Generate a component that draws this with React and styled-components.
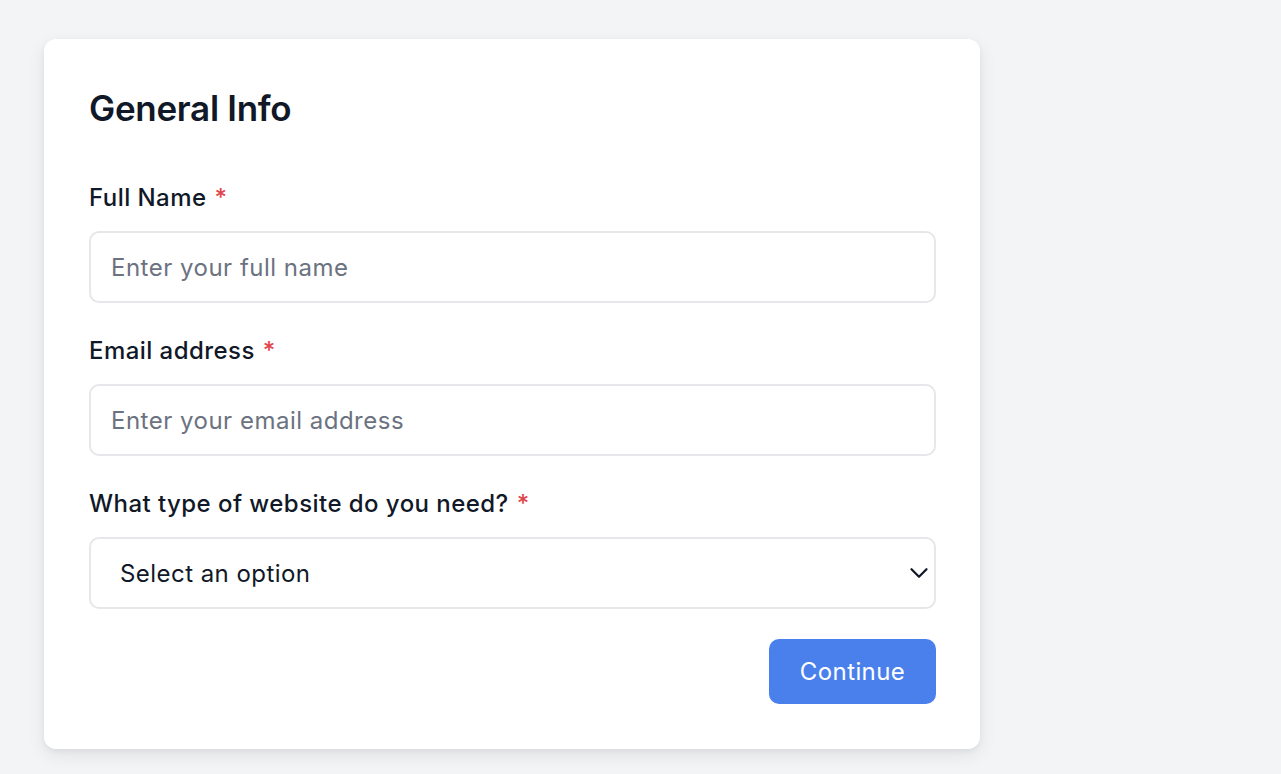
import React from "react";
import styled, { createGlobalStyle } from "styled-components";

const GlobalStyle = createGlobalStyle`
    html, body {
        margin: 0;
        padding: 0;
        background: #f3f4f6;
        font-family: Inter, "Noto Sans", "Liberation Sans", sans-serif;
        color: #111827;
    }
    * {
        box-sizing: border-box;
    }
`;

const Page = styled.div`
    min-height: 774px;
    padding: 39px 0 0 44px;
`;

const Card = styled.form`
    width: 936px;
    background: #ffffff;
    border-radius: 12px;
    padding: 45px 44px 45px 45px;
    box-shadow: 0 6px 18px rgba(0, 0, 0, 0.08), 0 2px 5px rgba(0, 0, 0, 0.05);
`;

const Title = styled.h2`
    margin: 0 0 48px;
    font-size: 35px;
    line-height: 48px;
    font-weight: 600;
    letter-spacing: -0.3px;
    color: #111827;
`;

const Field = styled.div`
    margin-bottom: 30px;
`;

const Label = styled.label`
    display: block;
    font-size: 24px;
    line-height: 36px;
    font-weight: 450;
    letter-spacing: 0.45px;
    color: #111827;
    margin-bottom: 15px;
    span {
        color: #e0474c;
        margin-left: 8px;
    }
`;

const Input = styled.input`
    display: block;
    width: 100%;
    height: 72px;
    padding: 0 20px;
    border: 2px solid #e5e7eb;
    border-radius: 10px;
    font-family: inherit;
    font-size: 24px;
    letter-spacing: 0.5px;
    color: #111827;
    outline: none;
    background: #fff;
    &::placeholder {
        color: #6b7280;
    }
`;

const SelectWrap = styled.div`
    position: relative;
    svg {
        position: absolute;
        right: 2px;
        top: 50%;
        transform: translateY(-50%);
        pointer-events: none;
    }
`;

const Select = styled.select`
    display: block;
    width: 100%;
    height: 72px;
    padding: 0 29px;
    border: 2px solid #e5e7eb;
    border-radius: 10px;
    font-family: inherit;
    font-size: 24px;
    letter-spacing: 0.45px;
    color: #111827;
    background: #fff;
    appearance: none;
    outline: none;
`;

const Actions = styled.div`
    display: flex;
    justify-content: flex-end;
    margin-top: 1px;
`;

const Button = styled.button`
    width: 167px;
    height: 65px;
    border: none;
    border-radius: 10px;
    background: #4a80ec;
    color: #ffffff;
    font-family: inherit;
    font-size: 24px;
    font-weight: 400;
    letter-spacing: 0.4px;
    cursor: pointer;
`;

const Chevron = () => (
    <svg width="30" height="30" viewBox="0 0 24 24" fill="none" stroke="#111827" strokeWidth="1.8" strokeLinecap="round" strokeLinejoin="round">
        <path d="M6 9l6 6 6-6" />
    </svg>
);

const App = () => {
    return (
        <Page>
            <GlobalStyle />
            <Card onSubmit={e => e.preventDefault()}>
                <Title>General Info</Title>
                <Field>
                    <Label>Full Name<span>*</span></Label>
                    <Input placeholder="Enter your full name" />
                </Field>
                <Field>
                    <Label>Email address<span>*</span></Label>
                    <Input placeholder="Enter your email address" />
                </Field>
                <Field>
                    <Label>What type of website do you need?<span>*</span></Label>
                    <SelectWrap>
                        <Select defaultValue="">
                            <option value="" disabled>Select an option</option>
                            <option>Business</option>
                            <option>Portfolio</option>
                            <option>E-commerce</option>
                            <option>Blog</option>
                        </Select>
                        <Chevron />
                    </SelectWrap>
                </Field>
                <Actions>
                    <Button type="submit">Continue</Button>
                </Actions>
            </Card>
        </Page>
    );
};

export default App;
